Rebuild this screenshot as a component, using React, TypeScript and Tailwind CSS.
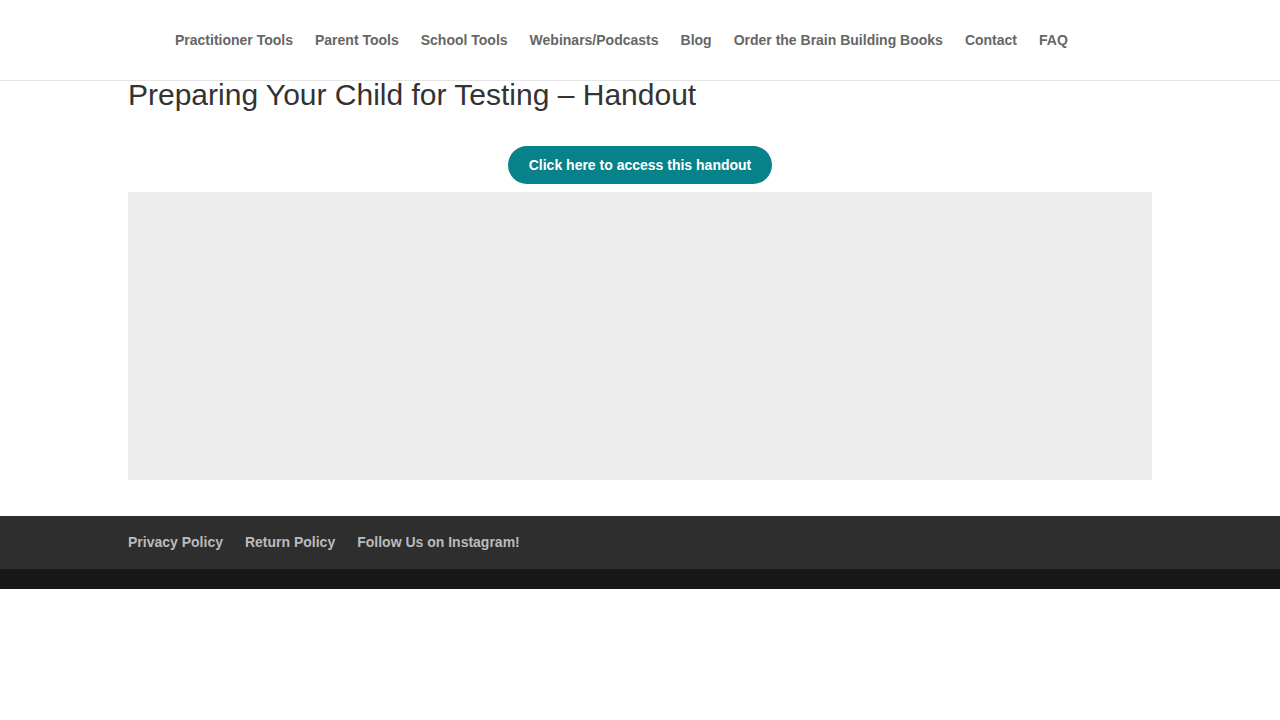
import React from 'react';

const navItems = [
  'Practitioner Tools',
  'Parent Tools',
  'School Tools',
  'Webinars/Podcasts',
  'Blog',
  'Order the Brain Building Books',
  'Contact',
  'FAQ',
];

const footerLinks = ['Privacy Policy', 'Return Policy', 'Follow Us on Instagram!'];

export default function App() {
  return (
    <div className="min-h-[720px] bg-white font-['Liberation_Sans',Arial,sans-serif]">
      <header className="h-[81px] border-b border-[#e5e5e5] bg-white">
        <nav className="flex items-center gap-[22px] pl-[175px] pt-[31px]">
          {navItems.map((item) => (
            <a key={item} href="#" className="text-[14px] font-bold leading-[18px] text-[#666666]">
              {item}
            </a>
          ))}
        </nav>
      </header>

      <main className="mx-auto w-[1024px]">
        <h1 className="-mt-px text-[30px] leading-[30px] font-normal text-[#333333]">
          Preparing Your Child for Testing – Handout
        </h1>
        <div className="flex justify-center pt-[36px]">
          <a
            href="#"
            className="flex h-[38px] items-center rounded-full bg-[#07828a] px-[21px] text-[14px] font-bold text-white"
          >
            Click here to access this handout
          </a>
        </div>
        <div className="mt-[8px] h-[288px] bg-[#ededed]" />
      </main>

      <footer className="mt-[36px]">
        <div className="h-[53px] bg-[#2e2e2e]">
          <div className="mx-auto flex h-full w-[1024px] items-center gap-[22px]">
            {footerLinks.map((link) => (
              <a key={link} href="#" className="text-[14px] font-bold text-[#bbbbbb]">
                {link}
              </a>
            ))}
          </div>
        </div>
        <div className="h-[20px] bg-[#171717]" />
      </footer>
    </div>
  );
}
